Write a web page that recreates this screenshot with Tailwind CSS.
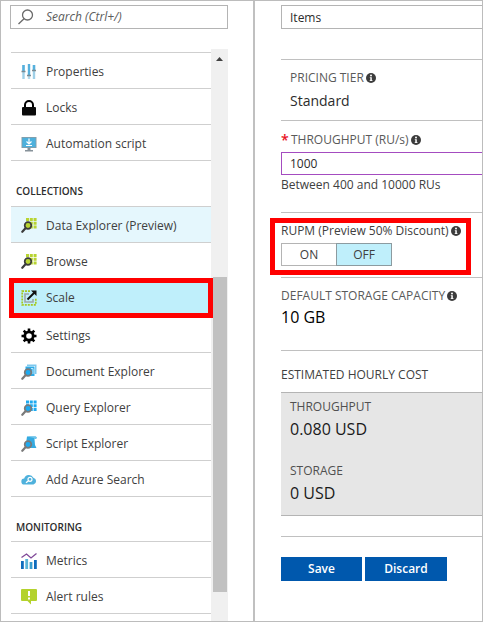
<!DOCTYPE html>
<html lang="en">
<head>
<meta charset="utf-8">
<meta name="viewport" content="width=device-width, initial-scale=1">
<title>Scale</title>
<script src="https://cdn.jsdelivr.net/npm/@tailwindcss/browser@4"></script>
</head>
<body class="bg-white font-['Open_Sans','Noto_Sans',sans-serif] text-[12px] leading-4 text-[#404040]">
<svg class="hidden" aria-hidden="true">
  <symbol id="info" viewBox="0 0 10 10"><circle cx="5" cy="5" r="5" fill="#3c3c3c"/><circle cx="5" cy="2.6" r="1" fill="#fff"/><path d="M3.8 4.2h2v3h.7v.9H3.7v-.9h.6V5h-.5z" fill="#fff"/></symbol>
  <symbol id="grid-green" viewBox="0 0 16 16"><path d="M5 0h3v3H5zM8.800 0h3v3h-3zM12.600 0h3v3h-3zM5 3.800h3v3H5zM8.800 3.800h3v3h-3zM12.600 3.800h3v3h-3zM8.800 7.600h3v3h-3zM12.600 7.600h3v3h-3z" fill="#b8d432"/><circle cx="7" cy="7.500" r="3.300" fill="#b8d432" stroke="#3c3c3c" stroke-width="1.700"/><path d="M4.500 10.200 1.300 13.800" stroke="#3c3c3c" stroke-width="2.200" stroke-linecap="round"/></symbol>
  <symbol id="lens" viewBox="0 0 16 16"><circle cx="7" cy="8.500" r="3.300" fill="#1eaaf0" stroke="#7a7a7a" stroke-width="1.700"/><path d="M4.500 11.200 1.300 14.800" stroke="#7a7a7a" stroke-width="2.200" stroke-linecap="round"/></symbol>
</svg>
<div class="flex min-h-screen border border-[#bcbcbc]">
  <aside class="flex w-[252px] shrink-0 flex-col pl-[9px] pr-[25px] pt-1">
    <div class="flex h-6 items-center gap-3 border border-[#b4b4b4] pl-[7px]">
      <svg class="size-4 shrink-0" viewBox="0 0 16 16" fill="none" stroke="#6a6a6a" stroke-width="1.300"><circle cx="9.500" cy="6" r="5"/><path d="M6 9.700.5 15"/></svg>
      <input type="search" aria-label="Search" placeholder="Search (Ctrl+/)" class="w-full min-w-0 italic outline-none placeholder:text-[#5c5c5c]">
    </div>
    <div class="mt-5 flex flex-1">
      <nav class="ml-px flex-1 pt-[3px]">
        <ul class="border-t border-[#cfcfcf]">
          <li class="h-9 border-b border-[#cfcfcf]"><a href="#" class="flex h-full items-center gap-[9px] pl-[10px] pt-[2px]">
            <svg class="size-4" viewBox="0 0 16 16"><path d="M2.500 1v14M13 1v14" stroke="#9fd0e8" stroke-width="2.400"/><path d="M8 0v12M2.500 1v6M13 1v5" stroke="#55b0dd" stroke-width="2.400"/><path d="M8 12v3" stroke="#b5d9ea" stroke-width="2.400"/><path d="M.5 7.500h4M6 11.500h4M11 6.500h4" stroke="#7a8a92" stroke-width="1.500"/></svg>Properties</a></li>
          <li class="h-9 border-b border-[#cfcfcf]"><a href="#" class="flex h-full items-center gap-[9px] pl-[10px] pt-[2px]">
            <svg class="size-4" viewBox="0 0 16 16"><path d="M4 8V5a4 4 0 0 1 8 0v3" fill="none" stroke="#000" stroke-width="2"/><rect x="1" y="7" width="14" height="8.500" rx="1" fill="#0a0a0a"/></svg>Locks</a></li>
          <li class="h-9 border-b border-[#cfcfcf]"><a href="#" class="flex h-full items-center gap-[9px] pl-[10px] pt-[2px]">
            <svg class="size-4" viewBox="0 0 16 16"><path d="M.5 1h15v11H.5z" fill="#8c9ba3"/><path d="M1.300 1.800h13.400v9.400H1.300z" fill="#4db0dc"/><path d="M6.500 12h3v2h2.500v1.500H4V14h2.500z" fill="#87929a"/><path d="M8 2.500v5M5.500 5.500 8 8l2.500-2.500M5 9.500h6" fill="none" stroke="#fff" stroke-width="1.200"/></svg>Automation script</a></li>
        </ul>
        <h2 class="pb-[7px] pl-[5px] pt-[22px] text-[10px] font-semibold text-[#2c2c2c]">COLLECTIONS</h2>
        <ul class="border-t border-[#cfcfcf]">
          <li class="h-9 border-b border-[#cfcfcf] bg-[#e5f7fd]"><a href="#" class="flex h-full items-center gap-[9px] pl-[10px] pt-[2px]"><svg class="size-4"><use href="#grid-green"/></svg>Data Explorer (Preview)</a></li>
          <li class="h-9 border-b border-[#cfcfcf]"><a href="#" class="flex h-full items-center gap-[9px] pl-[10px] pt-[2px]"><svg class="size-4"><use href="#grid-green"/></svg>Browse</a></li>
          <li class="relative h-[38px] bg-[#bfeffb]"><a href="#" aria-current="page" class="flex h-full items-center gap-[9px] pl-[10px]">
            <svg class="size-4" viewBox="0 0 16 16" fill="none"><path d="M9 1.200H1.200v13.600h13.600V8" stroke="#a5c81e" stroke-width="1.700" stroke-dasharray="2 1"/><path d="M8 4H4v8h8V9" stroke="#a0a5a8" stroke-width="1.600"/><path d="m6.500 9.500 7-7" stroke="#111" stroke-width="2"/><path d="M10 .5h5.500V6z" fill="#111"/></svg>Scale</a>
            <span class="pointer-events-none absolute -inset-x-[2px] -inset-y-px border-5 border-[#ff0000]"></span></li>
          <li class="h-9 border-b border-[#cfcfcf]"><a href="#" class="flex h-full items-center gap-[9px] pl-[10px] pt-[2px]">
            <svg class="size-4" viewBox="0 0 16 16" fill="none" stroke="#000"><circle cx="8" cy="8" r="4.200" stroke-width="2.800"/><path d="M8 .5v3M8 12.500v3M.5 8h3M12.500 8h3M2.700 2.700l2 2M11.300 11.300l2 2M2.700 13.300l2-2M11.300 4.700l2-2" stroke-width="2.600"/></svg>Settings</a></li>
          <li class="h-9 border-b border-[#cfcfcf]"><a href="#" class="flex h-full items-center gap-[9px] pl-[10px] pt-[2px]">
            <svg class="size-4" viewBox="0 0 16 16"><path d="M6 .5h9.500V10H14V2H6z" fill="#7cc8ee"/><path d="M4.500 2.500H13.500V12H4.500z" fill="#2cabe8"/><path d="M10 4.500h2V10" fill="none" stroke="#bfe6f8"/><use href="#lens"/></svg>Document Explorer</a></li>
          <li class="h-9 border-b border-[#cfcfcf]"><a href="#" class="flex h-full items-center gap-[9px] pl-[10px] pt-[2px]">
            <svg class="size-4" viewBox="0 0 16 16"><path d="M5 .5h3v3H5zM8.800.5h3v3h-3zM12.600.5h3v3h-3zM5 4.300h3v3H5zM8.800 4.300h3v3h-3zM12.600 4.300h3v3h-3zM8.800 8.100h3v3h-3zM12.600 8.100h3v3h-3z" fill="#1eaaf0"/><use href="#lens"/></svg>Query Explorer</a></li>
          <li class="h-9 border-b border-[#cfcfcf]"><a href="#" class="flex h-full items-center gap-[9px] pl-[10px] pt-[2px]">
            <svg class="size-4" viewBox="0 0 16 16"><path d="M6 .5h8.500c1.500 0 1.500 2.500 0 2.500h-1l.5 6 1.500 3H7L5.500 4z" fill="#35aae0"/><path d="M6 .5h8.500c1.500 0 1.500 2.500 0 2.500H13V2z" fill="#6fc3ea"/><use href="#lens"/></svg>Script Explorer</a></li>
          <li class="h-9 border-b border-[#cfcfcf]"><a href="#" class="flex h-full items-center gap-[9px] pl-[10px] pt-[2px]">
            <svg class="size-4" viewBox="0 0 16 16"><path d="M3.500 12.500a3 3 0 0 1-.3-6 5 5 0 0 1 9.200-.8 3.500 3.500 0 0 1 .1 6.800z" fill="#4fb1dc"/><circle cx="9" cy="7.300" r="2" fill="none" stroke="#fff" stroke-width="1.200"/><path d="m7.500 8.800-2.500 2" stroke="#fff" stroke-width="1.400"/></svg>Add Azure Search</a></li>
        </ul>
        <h2 class="pb-[6px] pl-[5px] pt-[22px] text-[10px] font-semibold text-[#2c2c2c]">MONITORING</h2>
        <ul class="border-t border-[#cfcfcf]">
          <li class="h-9 border-b border-[#cfcfcf]"><a href="#" class="flex h-full items-center gap-[9px] pl-[10px] pt-[2px]">
            <svg class="size-4" viewBox="0 0 16 16"><path d="M0 8h2.800v8H0zM13 7h2.800v9H13z" fill="#0f6cbd"/><path d="M4.300 6h2.800v10H4.300z" fill="#59b4d9"/><path d="M8.600 9h2.800v7H8.600z" fill="#3a9fd0"/><path d="m.5 4.500 5-3.500L10 5l5.500-4.500" fill="none" stroke="#804998" stroke-width="1.300"/></svg>Metrics</a></li>
          <li class="h-9 border-b border-[#cfcfcf]"><a href="#" class="flex h-full items-center gap-[9px] pl-[10px] pt-[2px]">
            <svg class="size-4" viewBox="0 0 16 16"><path d="M1 0h14a1 1 0 0 1 1 1v10a1 1 0 0 1-1 1h-5v3.500L6.500 12H1a1 1 0 0 1-1-1V1a1 1 0 0 1 1-1z" fill="#b4d22d"/><path d="M7 2h2v5H7zM7 8.500h2v2H7z" fill="#fff"/></svg>Alert rules</a></li>
        </ul>
      </nav>
      <div class="flex w-[17px] flex-col items-center bg-[#f0f0f0]" aria-hidden="true">
        <svg class="mt-2 h-1 w-[7px]" viewBox="0 0 7 4"><path d="M3.500 0 7 4H0z" fill="#404040"/></svg>
        <span class="mb-[29px] mt-auto h-[315px] w-[14px] bg-[#c1c1c1]"></span>
      </div>
    </div>
  </aside>
  <main class="min-w-0 flex-1 border-l-2 border-[#c0c0c0] pl-[26px] pt-1">
    <input type="text" aria-label="Collection" value="Items" class="block h-6 w-full border border-r-0 border-[#b4b4b4] pl-2 text-[#2c2c2c] outline-none">
    <section class="mt-[30px] h-[61px] border-t border-[#c0c0c0] pl-[9px] pt-[10px]">
      <h3 class="flex items-center gap-[2px] text-[#5a5a5a]">PRICING TIER <svg class="size-[10px]"><use href="#info"/></svg></h3>
      <p class="mt-[5px] text-[14px] leading-5 text-[#2c2c2c]">Standard</p>
    </section>
    <section class="h-[92px] border-t border-[#c0c0c0] pt-[11px]">
      <label for="ru" class="flex items-center gap-[2px] text-[#5a5a5a]"><span class="w-[8px] text-[14px] font-semibold text-[#e81123]">*</span>THROUGHPUT (RU/s) <svg class="size-[10px]"><use href="#info"/></svg></label>
      <input id="ru" type="text" value="1000" class="mt-1 block h-[23px] w-full border border-r-0 border-[#a44cc0] pl-2 text-[#2c2c2c] outline-none">
      <p class="mt-[2px]">Between 400 and 10000 RUs</p>
    </section>
    <section class="relative h-[65px] border-t border-[#c0c0c0] pt-[10px]">
      <h3 class="flex items-center gap-[2px] whitespace-nowrap">RUPM (Preview 50% Discount) <svg class="size-[10px] shrink-0"><use href="#info"/></svg></h3>
      <div class="mt-1 flex">
        <button type="button" class="h-[23px] w-[55px] border border-r-0 border-[#b4b4b4]">ON</button>
        <button type="button" aria-pressed="true" class="h-[23px] w-14 border border-[#8c9ba0] bg-[#bfeffb]">OFF</button>
      </div>
      <span class="pointer-events-none absolute -left-[11px] right-[11px] top-[5px] h-[57px] border-5 border-[#ff0000]"></span>
    </section>
    <section class="h-[73px] border-t border-[#c0c0c0] pt-[10px]">
      <h3 class="flex items-center gap-[2px] whitespace-nowrap text-[#5a5a5a]">DEFAULT STORAGE CAPACITY <svg class="size-[10px] shrink-0"><use href="#info"/></svg></h3>
      <p class="mt-[3px] text-[16px] leading-5 text-black">10 GB</p>
    </section>
    <section class="border-t border-[#c0c0c0] pt-4">
      <h3>ESTIMATED HOURLY COST</h3>
      <dl class="mt-[9px] h-[124px] border-y border-[#b4b4b4] bg-[#e6e6e6] pl-[9px] pt-[6px]">
        <dt class="text-[#505050]">THROUGHPUT</dt>
        <dd class="mt-1 text-[16px] leading-5 text-[#1a1a1a]">0.080 USD</dd>
        <dt class="mt-6 text-[#505050]">STORAGE</dt>
        <dd class="mt-1 text-[16px] leading-5 text-[#1a1a1a]">0 USD</dd>
      </dl>
    </section>
    <div class="mt-5 flex gap-[3px] border-t border-[#c0c0c0] pt-5 font-semibold text-white">
      <button type="button" class="h-6 w-[81px] bg-[#0058ad]">Save</button>
      <button type="button" class="h-6 w-[82px] bg-[#0058ad]">Discard</button>
    </div>
  </main>
</div>
</body>
</html>
